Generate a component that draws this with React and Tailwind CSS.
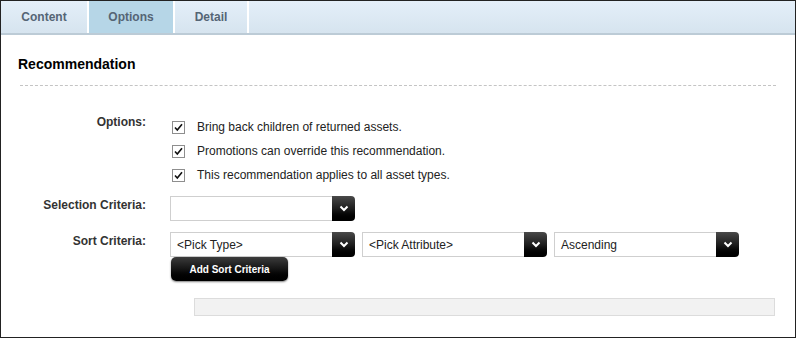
import React from 'react';

const font = { fontFamily: '"Liberation Sans", Arial, sans-serif' };

const Chevron = () => (
  <svg width="10" height="7" viewBox="0 0 10 7">
    <path d="M1.5 1.5 L5 5 L8.5 1.5" fill="none" stroke="#fff" strokeWidth="2" />
  </svg>
);

const Select = ({ value }) => (
  <div className="flex h-[25px] w-[185px]">
    <div className="flex flex-1 items-center border border-[#cfcfcf] border-r-0 bg-white pl-[6px] text-[12px] text-[#222]">
      {value}
    </div>
    <div className="flex w-[23px] items-center justify-center rounded-r-[4px] bg-gradient-to-b from-[#4a4a4a] via-[#1e1e1e] to-[#000]">
      <Chevron />
    </div>
  </div>
);

const Check = () => (
  <div className="flex h-[13px] w-[13px] items-center justify-center border border-[#8e8e8e] bg-white">
    <svg width="9" height="9" viewBox="0 0 9 9">
      <path d="M1 4.5 L3.3 7 L8 1.2" fill="none" stroke="#111" strokeWidth="1.6" />
    </svg>
  </div>
);

const tabs = [
  { name: 'Content', w: 'w-[88px]' },
  { name: 'Options', w: 'w-[86px]', active: true },
  { name: 'Detail', w: 'w-[74px]' },
];

const options = [
  'Bring back children of returned assets.',
  'Promotions can override this recommendation.',
  'This recommendation applies to all asset types.',
];

export default function App() {
  return (
    <div className="h-[338px] w-[796px] border border-[#222] bg-white" style={font}>
      <div className="flex h-[34px] border-b-2 border-[#bccbd6] bg-gradient-to-b from-[#e4eff9] to-[#d6e4ef]">
        {tabs.map((t) => (
          <div
            key={t.name}
            className={`flex items-center justify-center border-r-2 border-white text-[12px] font-bold text-[#556575] ${t.w} ${
              t.active ? 'bg-[#b6d6e7]' : ''
            }`}
          >
            {t.name}
          </div>
        ))}
      </div>

      <div className="px-[17px] pt-[19px]">
        <h2 className="text-[14px] font-bold text-black">Recommendation</h2>
        <div className="mt-[10px] ml-[2px] mr-[2px] border-t border-dashed border-[#c4c4c4]" />

        <div className="mt-[27px] flex">
          <div className="w-[128px] text-right text-[12px] font-bold text-[#333]">Options:</div>
          <div className="ml-[26px] flex flex-col gap-[6px] pt-[5px]">
            {options.map((o) => (
              <div key={o} className="flex items-center gap-[12px] text-[12px] text-[#222]">
                <Check />
                <span>{o}</span>
              </div>
            ))}
          </div>
        </div>

        <div className="mt-[12px] flex">
          <div className="w-[128px] text-right text-[12px] font-bold text-[#333]">Selection Criteria:</div>
          <div className="ml-[24px]">
            <Select value="" />
          </div>
        </div>

        <div className="mt-[11px] flex">
          <div className="w-[128px] text-right text-[12px] font-bold text-[#333]">Sort Criteria:</div>
          <div className="ml-[24px] flex flex-col">
            <div className="flex gap-[7px]">
              <Select value="<Pick Type>" />
              <Select value="<Pick Attribute>" />
              <Select value="Ascending" />
            </div>
            <button className="ml-[1px] h-[24px] w-[117px] rounded-[5px] bg-gradient-to-b from-[#3c3c3c] via-[#151515] to-[#000] text-[10px] font-bold text-white shadow-[0_1px_2px_rgba(0,0,0,0.5)]">
              Add Sort Criteria
            </button>
          </div>
        </div>

        <div className="ml-[176px] mt-[17px] h-[18px] w-[581px] border border-[#dcdcdc] bg-[#f2f2f2]" />
      </div>
    </div>
  );
}
